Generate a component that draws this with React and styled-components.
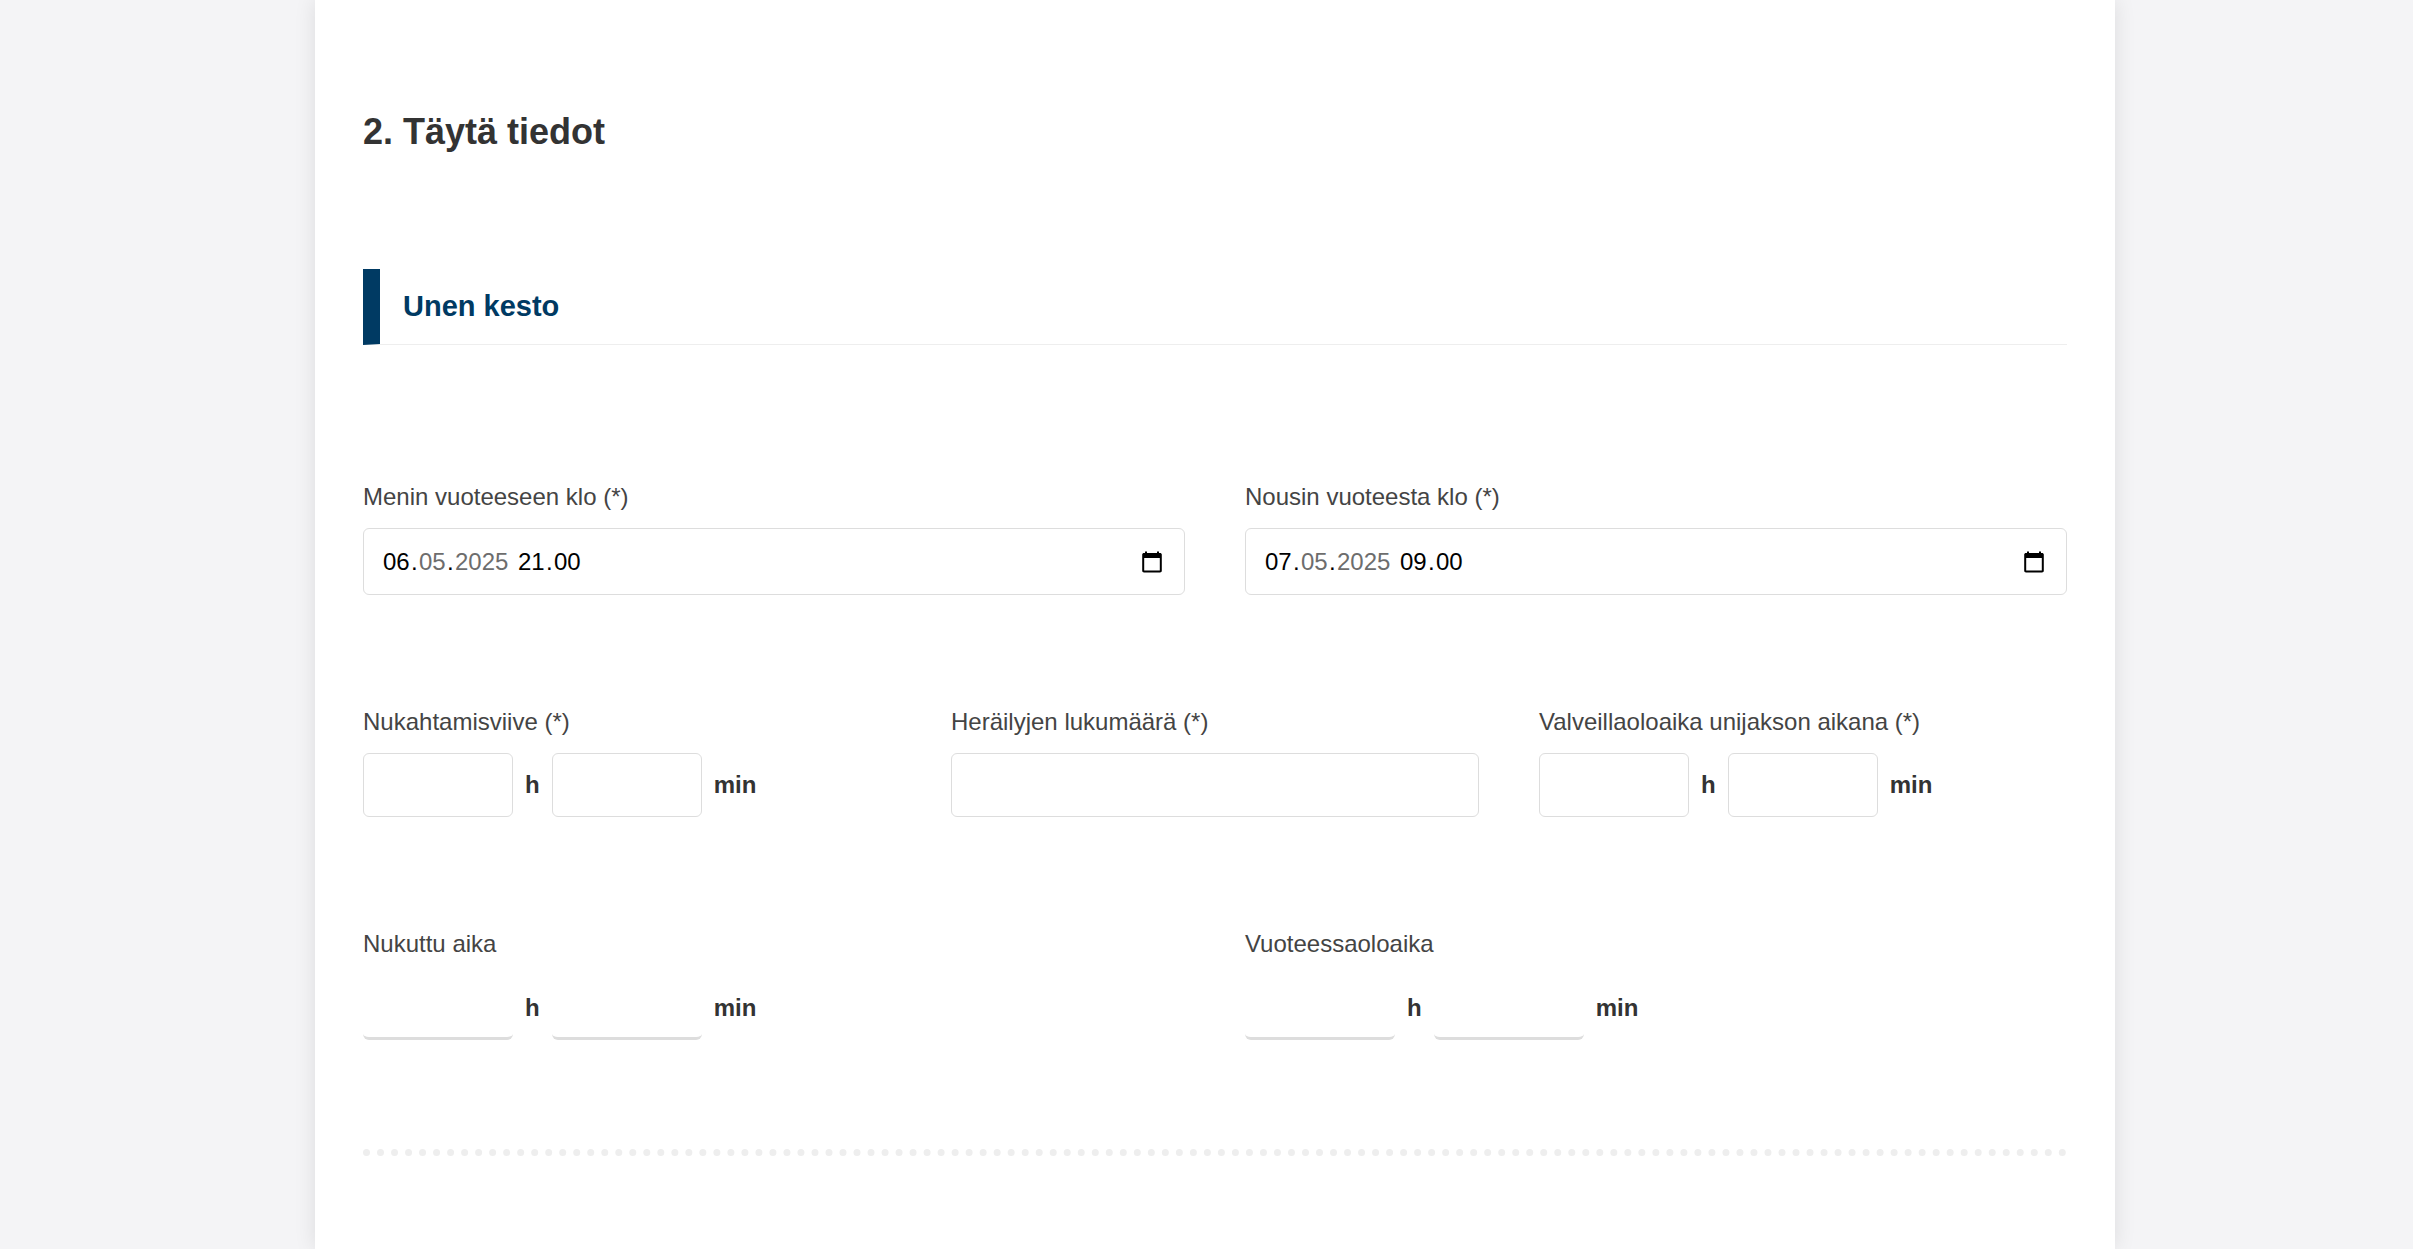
import React from "react";
import styled, { createGlobalStyle } from "styled-components";

const GlobalStyle = createGlobalStyle`
  *, *::before, *::after { box-sizing: border-box; }
  body {
    margin: 0;
    background: #f4f4f6;
    color: #333;
    font: 24px/36px "Liberation Sans", Arial, sans-serif;
  }
`;

const Page = styled.div`
  display: flex;
  justify-content: center;
  padding: 0 48px 0 65px;
`;

const Card = styled.main`
  width: 100%;
  max-width: 1800px;
  min-height: 100vh;
  padding: 105px 48px 92px;
  background: #fff;
  box-shadow: 0 0 20px rgba(0, 0, 0, 0.1);
`;

const Title = styled.h2`
  margin: 0 0 110px;
  font-size: 36px;
  line-height: 54px;
`;

const SectionTitle = styled.h3`
  margin: 0 0 134px;
  padding: 15px 23px 16px;
  border-left: 17px solid #003a63;
  border-bottom: 1px solid #eee;
  color: #003a63;
  font-size: 29px;
  line-height: 44px;
`;

const Row = styled.div`
  display: grid;
  grid-template-columns: repeat(${(p) => p.$columns}, minmax(0, 1fr));
  gap: 60px;
  margin-bottom: 109px;
`;

const Field = styled.fieldset`
  min-width: 0;
  margin: 0;
  padding: 0;
  border: 0;
`;

const Legend = styled.legend`
  display: block;
  width: 100%;
  padding: 0 0 13px;
  color: #444;
`;

const Label = styled.label`
  display: block;
  padding-bottom: 13px;
  color: #444;
`;

const Input = styled.input`
  display: block;
  width: ${(p) => (p.$short ? "150px" : "100%")};
  height: 64px;
  padding: 0 18px;
  border: 1px solid #ddd;
  border-radius: 6px;
  background: #fff;
  color: #000;
  font: inherit;
  outline: 0;
`;

const ResultInput = styled(Input)`
  height: 65px;
  border: 0 solid #ddd;
  border-bottom-width: 3px;
`;

const Duration = styled.div`
  display: flex;
  align-items: center;
  gap: 12px;
`;

const Unit = styled.span`
  font-weight: 700;
`;

const DateBox = styled.div`
  display: flex;
  align-items: center;
  height: 67px;
  padding: 0 20px 0 18px;
  border: 1px solid #ddd;
  border-radius: 6px;
  background: #fff;
  color: #000;
`;

const DatePart = styled.input`
  width: ${(p) => (p.$long ? "55px" : "29px")};
  padding: 0 1px;
  border: 0;
  background: none;
  color: #000;
  font: inherit;
  outline: 0;

  &:disabled { color: #6d6d6d; }
`;

const Separator = styled.span`
  width: ${(p) => (p.$wide ? "8px" : "7px")};
  white-space: pre;
`;

const PickerButton = styled.button`
  display: flex;
  margin-left: auto;
  padding: 0;
  border: 0;
  background: none;
  color: #000;
`;

const Divider = styled.hr`
  margin: 0;
  border: 0;
  border-top: 7px dotted #eee;
`;

function CalendarIcon() {
  return (
    <svg width="24" height="24" viewBox="0 0 24 24" fill="currentColor" aria-hidden="true">
      <path d="M20 3h-1V1.5h-2V3H7V1.500H5V3H4c-1 0-1.800.7-1.800 1.600v16.200c0 .9.8 1.700 1.800 1.700h16c1 0 1.800-.8 1.800-1.700V4.600C21.800 3.700 21 3 20 3zm-.2 17.500H4.200V8h15.600v12.500z" />
    </svg>
  );
}

function DateTimeField({ label, day, hour }) {
  return (
    <Field>
      <Legend>{label}</Legend>
      <DateBox>
        <DatePart aria-label="Päivä" defaultValue={day} />
        <Separator>.</Separator>
        <DatePart aria-label="Kuukausi" defaultValue="05" disabled />
        <Separator>.</Separator>
        <DatePart aria-label="Vuosi" defaultValue="2025" disabled $long />
        <Separator $wide> </Separator>
        <DatePart aria-label="Tunnit" defaultValue={hour} />
        <Separator>.</Separator>
        <DatePart aria-label="Minuutit" defaultValue="00" />
        <PickerButton type="button" aria-label="Valitse päivämäärä">
          <CalendarIcon />
        </PickerButton>
      </DateBox>
    </Field>
  );
}

function DurationField({ label, result }) {
  const Box = result ? ResultInput : Input;
  return (
    <Field>
      <Legend>{label}</Legend>
      <Duration>
        <Box $short aria-label={`${label} h`} readOnly={result} />
        <Unit>h</Unit>
        <Box $short aria-label={`${label} min`} readOnly={result} />
        <Unit>min</Unit>
      </Duration>
    </Field>
  );
}

export default function App() {
  return (
    <Page>
      <GlobalStyle />
      <Card>
        <Title>2. Täytä tiedot</Title>
        <SectionTitle>Unen kesto</SectionTitle>
        <Row $columns={2}>
          <DateTimeField label="Menin vuoteeseen klo (*)" day="06" hour="21" />
          <DateTimeField label="Nousin vuoteesta klo (*)" day="07" hour="09" />
        </Row>
        <Row $columns={3}>
          <DurationField label="Nukahtamisviive (*)" />
          <div>
            <Label htmlFor="wakeups">Heräilyjen lukumäärä (*)</Label>
            <Input id="wakeups" />
          </div>
          <DurationField label="Valveillaoloaika unijakson aikana (*)" />
        </Row>
        <Row $columns={2}>
          <DurationField label="Nukuttu aika" result />
          <DurationField label="Vuoteessaoloaika" result />
        </Row>
        <Divider />
      </Card>
    </Page>
  );
}
